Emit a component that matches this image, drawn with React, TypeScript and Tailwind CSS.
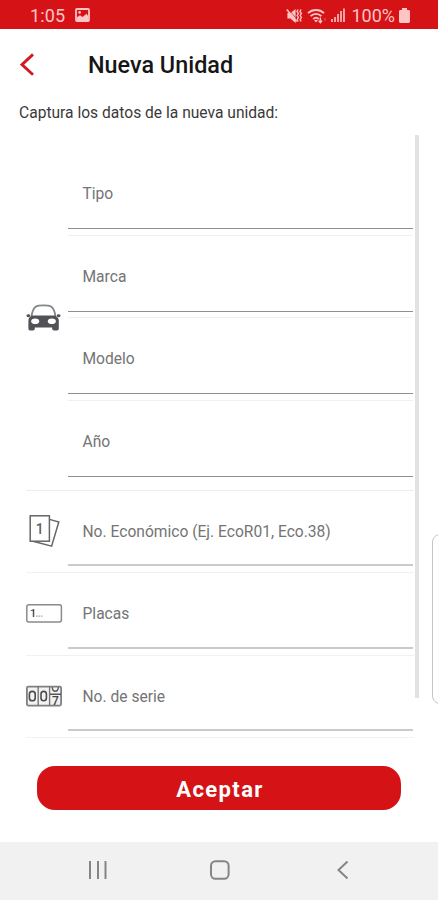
import React from 'react';

interface FieldProps {
  label: string;
  lineClass?: string;
  divider?: boolean;
}

interface UnitRow {
  label: string;
  icon: React.ReactNode;
}

const StatusBar: React.FC = () => (
  <div className="h-[29px] bg-[#d51317] text-[#ffc4c4] flex items-center justify-between pl-[30px] pr-[28px] pt-[2px] shrink-0">
    <div className="flex items-center">
      <span className="text-[18px] leading-none w-[45px] whitespace-nowrap tracking-[0.1px]">1:05</span>
      <svg width="15" height="14" viewBox="0 0 15 14" className="-mt-[1px]">
        <rect x="1" y="1" width="13" height="12" rx="1" fill="none" stroke="currentColor" strokeWidth="1.8" />
        <path d="M2 12V9.2L5 7.2L7.5 9L11.5 5.8L13.2 8V12Z" fill="currentColor" />
        <circle cx="4.6" cy="4.4" r="1.3" fill="currentColor" />
      </svg>
    </div>
    <div className="flex items-center">
      {/* muted speaker with vibration */}
      <svg width="17" height="16" viewBox="0 0 17 16" className="mr-[4px]">
        <path d="M1.4 5H4.4L9.6 1V15L4.4 10.6H1.4Z" fill="currentColor" />
        <path d="M2.4 1L10.6 11" stroke="#d51317" strokeWidth="0.7" />
        <path d="M0.8 1.6L10.6 13.6" stroke="currentColor" strokeWidth="1.6" />
        <path d="M12 1.5L11 3.5L12.4 5.5L11.2 7.5L12.4 9.5L11.2 11.5L12 13.5M15 1.5L14 3.5L15.4 5.5L14.2 7.5L15.4 9.5L14.2 11.5L15 13.5" fill="none" stroke="currentColor" strokeWidth="1.4" />
      </svg>
      <svg width="20" height="16" viewBox="0 0 20 16" className="mr-[4px]">
        <g fill="none" stroke="currentColor" strokeWidth="1.8">
          <path d="M1 5.2C5.4 0.9 12.6 0.9 17 5.2" />
          <path d="M3.6 8.2C6.6 5.2 11.4 5.2 14.4 8.2" />
          <path d="M6.2 11C8 9.4 10 9.4 11.8 11" />
        </g>
        <path d="M7 12L9 14.4L11 12Z" fill="currentColor" />
        <path d="M13.4 9.6V14.4M11.6 12.6L13.4 14.6L15.2 12.6" fill="none" stroke="currentColor" strokeWidth="1.4" />
        <path d="M18 12.6V10.2" stroke="currentColor" strokeWidth="1" opacity="0.5" />
      </svg>
      <svg width="15" height="15" viewBox="0 0 15 15" fill="currentColor" className="mr-[5px]">
        <rect x="0" y="11" width="2" height="3" opacity="0.8" />
        <rect x="3" y="9" width="2" height="5" opacity="0.8" />
        <rect x="6" y="6" width="2" height="8" opacity="0.8" />
        <rect x="9" y="3" width="2" height="11" opacity="0.8" />
        <rect x="12" y="0.5" width="2" height="13.5" opacity="0.8" />
      </svg>
      <span className="text-[18px] leading-none whitespace-nowrap mr-[4px]">100%</span>
      <svg width="11" height="15" viewBox="0 0 11 15" fill="currentColor">
        <path d="M3 0H8V2H9.6Q11 2 11 3.4V13.6Q11 15 9.6 15H1.4Q0 15 0 13.6V3.4Q0 2 1.4 2H3Z" />
      </svg>
    </div>
  </div>
);

const CarIcon: React.FC = () => (
  <svg width="36" height="27" viewBox="0 0 36 27">
    <path d="M5.4 12.5C6.2 8 7.6 4.4 9.6 2.8C12.5 1 22.5 1 25.4 2.8C27.4 4.4 28.8 8 29.6 12.5" fill="none" stroke="#85878b" strokeWidth="1.8" />
    <path d="M5.6 11.4H29.4L32 14Q32.8 15 32.8 17V24.8Q32.8 26.6 31 26.6H28Q26.2 26.6 26.2 24.8V23.4H8.8V24.8Q8.8 26.6 7 26.6H4Q2.4 26.6 2.4 24.8V17Q2.4 15 3 14Z" fill="#505257" />
    <path d="M4.2 12.2L3.2 13.2Q0.4 13.6 0.4 11.2Q1.2 9.8 3.8 10.4ZM30.8 12.2L31.8 13.2Q34.6 13.6 34.6 11.2Q33.8 9.8 31.2 10.4Z" fill="#505257" />
    <ellipse cx="9.2" cy="17.3" rx="4" ry="2.8" fill="#fff" />
    <ellipse cx="25.8" cy="17.3" rx="4" ry="2.8" fill="#fff" />
  </svg>
);

const CardsIcon: React.FC = () => (
  <svg width="32" height="34" viewBox="0 0 32 34" fill="none" stroke="#666" strokeWidth="1.5">
    <path d="M20.5 5.4L29.8 8L22.6 32.2L4 27.2" />
    <rect x="1.2" y="1.8" width="19.2" height="25.4" fill="#fff" />
    <text x="10.8" y="20" textAnchor="middle" fontSize="14" fontWeight="500" fill="#5f5f5f" stroke="none">1</text>
  </svg>
);

const PlateIcon: React.FC = () => (
  <svg width="38" height="20" viewBox="0 0 38 20">
    <rect x="0.8" y="0.8" width="34.6" height="17.2" rx="2" fill="#fff" stroke="#8a8a8a" strokeWidth="1.5" />
    <text x="4" y="13" fontSize="11" fontWeight="500" fill="#444">1</text>
    <path d="M10 12.2H16.5" stroke="#aaa" strokeWidth="1.3" strokeDasharray="1.6 0.8" />
  </svg>
);

const SerialIcon: React.FC = () => (
  <svg width="38" height="23" viewBox="0 0 38 23">
    <rect x="0.9" y="1.6" width="34.2" height="19" rx="1.5" fill="#f2f2f2" stroke="#808080" strokeWidth="1.8" />
    <path d="M12.2 1V21M23.6 1V21" stroke="#777" strokeWidth="1.4" />
    <g fill="none" stroke="#4c4c4c" strokeWidth="1.6">
      <rect x="3.4" y="6.4" width="5.8" height="9.4" rx="2.9" />
      <rect x="15" y="6.4" width="5.4" height="9.4" rx="2.7" />
    </g>
    <path d="M26.4 2.2C25.8 7.6 32.8 7.6 32.2 2.2M24 9.2H35" fill="none" stroke="#555" strokeWidth="1.4" />
    <text x="29.4" y="19.8" fontSize="12" fontWeight="500" textAnchor="middle" fill="#444">7</text>
  </svg>
);

const Field: React.FC<FieldProps> = ({ label, lineClass = 'h-px bg-[#8f8f8f]', divider = false }) => (
  <div className={`h-[82.5px] flex flex-col ${divider ? 'border-b border-[#efefef]' : ''}`}>
    <div className="h-[75px] pt-[7px] pl-[14.5px] flex items-center shrink-0">
      <span className="text-[15.6px] leading-[16px] text-[#747474] whitespace-nowrap">{label}</span>
    </div>
    <div className={lineClass}></div>
  </div>
);

const carFields = ['Tipo', 'Marca', 'Modelo'];

const rows: UnitRow[] = [
  { label: 'No. Económico (Ej. EcoR01, Eco.38)', icon: <CardsIcon /> },
  { label: 'Placas', icon: <PlateIcon /> },
  { label: 'No. de serie', icon: <SerialIcon /> },
];

const App: React.FC = () => {
  return (
    <div className="w-[438px] h-[900px] bg-white flex flex-col overflow-hidden relative font-['Roboto',sans-serif]">
      <StatusBar />

      <header className="h-[71px] flex items-center pl-[20px] shrink-0">
        <button aria-label="Regresar" className="w-[68px]">
          <svg width="16" height="24" viewBox="0 0 16 24" fill="none" stroke="#cf1a22" strokeWidth="2.8">
            <path d="M13 1.4L2 11.6L13 21.8" />
          </svg>
        </button>
        <h1 className="pt-[2px] text-[23.4px] leading-none font-medium text-[#161616] whitespace-nowrap">Nueva Unidad</h1>
      </header>

      <p className="h-[35px] pl-[19px] pt-[5px] text-[15.6px] leading-[16px] text-[#3a3a3a] whitespace-nowrap shrink-0">
        Captura los datos de la nueva unidad:
      </p>

      <main className="h-[604px] pl-[26px] flex shrink-0">
        <div className="w-[388px]">
          <div className="h-[355.5px] flex pt-[18px] border-b border-[#eeeeee]">
            <div className="w-[42px] pt-[151px] shrink-0">
              <CarIcon />
            </div>
            <div className="w-[345px]">
              {carFields.map((label) => (
                <Field key={label} label={label} divider />
              ))}
              <Field label="Año" />
            </div>
          </div>
          {rows.map((row) => (
            <div key={row.label} className="h-[82.5px] flex border-b border-[#f1f1f1]">
              <div className={`w-[42px] flex items-center shrink-0 ${row.label.startsWith('No. E') ? 'pl-[3px]' : ''}`}>{row.icon}</div>
              <div className="w-[345px]">
                <Field label={row.label} lineClass="h-[2px] -mt-[1.5px] bg-[#cacaca] shrink-0" />
              </div>
            </div>
          ))}
        </div>
        <div className="w-[4px] h-[563px] ml-px bg-[#e2e2e2]"></div>
      </main>

      <div className="px-[37px] pt-[27px] shrink-0">
        <button className="w-[364px] h-[44px] rounded-[18px] bg-[#d51317] text-white text-[22px] leading-none font-bold tracking-[1.4px] pt-[3px] pl-[2px]">
          Aceptar
        </button>
      </div>

      <nav className="h-[58px] mt-auto pb-[2px] bg-[#f1f1f1] flex items-center shrink-0 text-[#858585]">
        <svg width="20" height="20" viewBox="0 0 20 20" className="ml-[88px]" fill="none" stroke="currentColor" strokeWidth="2">
          <path d="M2 1V19M10 1V19M17.5 1V19" />
        </svg>
        <svg width="22" height="20" viewBox="0 0 22 20" className="ml-[101px]" fill="none" stroke="currentColor" strokeWidth="2">
          <rect x="2" y="1.2" width="17.6" height="17.6" rx="4.5" />
        </svg>
        <svg width="14" height="20" viewBox="0 0 14 20" className="ml-[105px]" fill="none" stroke="currentColor" strokeWidth="2">
          <path d="M11.5 1.5L2.5 10L11.5 18.5" />
        </svg>
      </nav>

      {/* edge panel handle */}
      <div className="absolute left-[432px] top-[534px] w-[16px] h-[170px] rounded-[8px] border border-[#c4c4c4] bg-white"></div>
    </div>
  );
};

export default App;
